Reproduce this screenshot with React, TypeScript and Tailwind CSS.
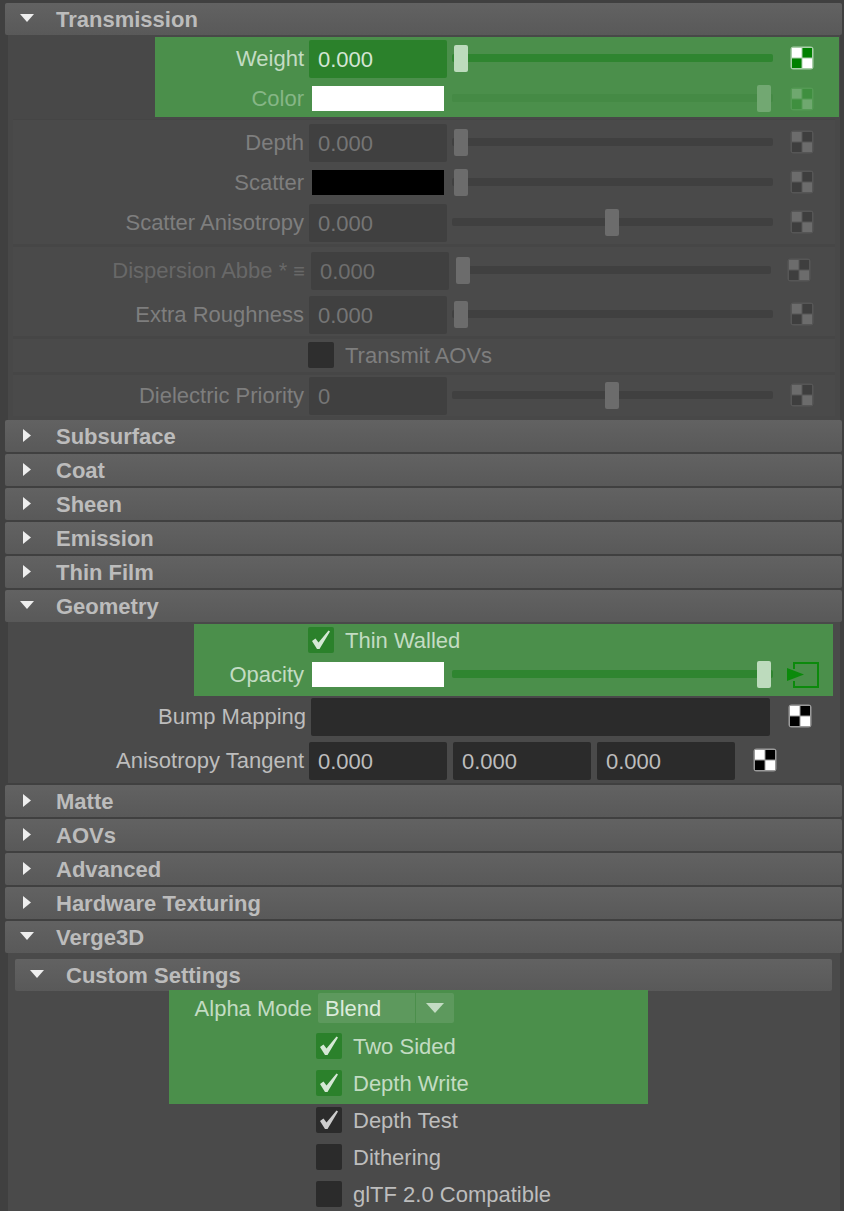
import React from "react";

const font = "font-['Liberation_Sans',Arial,sans-serif]";

function Tri({ open }: { open: boolean }) {
  return open ? (
    <svg width="14" height="8" viewBox="0 0 14 8" className="ml-[15px] mt-[-3px] shrink-0"><path d="M0 0H14L7 8Z" fill="#eeeeee" /></svg>
  ) : (
    <svg width="8" height="13" viewBox="0 0 8 13" className="ml-[18px] mr-[3px] mt-[-2px] shrink-0"><path d="M0 0L8 6.5L0 13Z" fill="#eeeeee" /></svg>
  );
}

function Header({ title, open = false }: { title: string; open?: boolean }) {
  return (
    <div className="flex items-center h-[32px] rounded-[2px] bg-gradient-to-b from-[#626262] to-[#595959]">
      <Tri open={open} />
      <span className="ml-[22px] pt-[2px] text-[22px] font-bold text-[#bcbcbc] leading-none">{title}</span>
    </div>
  );
}

type Tone = "normal" | "green" | "greenDim" | "dim" | "dimmer";

const labelTone: Record<Tone, string> = {
  normal: "text-[#bdbdbd]",
  green: "text-[#c3dcc3]",
  greenDim: "text-[#86b686]",
  dim: "text-[#7e7e7e]",
  dimmer: "text-[#686868]",
};

function Checker({ tone = "normal" }: { tone?: Tone }) {
  const c = {
    normal: ["#ffffff", "#000000", "#9a9a9a"],
    green: ["#ffffff", "#008000", "#a9cfa9"],
    greenDim: ["#6fa86f", "#3f8f3f", "#549a54"],
    dim: ["#6c6c6c", "#3e3e3e", "#565656"],
    dimmer: ["#6c6c6c", "#3e3e3e", "#565656"],
  }[tone];
  return (
    <svg width="24" height="24" viewBox="0 0 24 24" className="shrink-0 block">
      <rect x="0.5" y="0.5" width="23" height="23" rx="3" fill={c[2]} />
      <rect x="2" y="2" width="9.5" height="9.5" fill={c[0]} />
      <rect x="12.5" y="2" width="9.5" height="9.5" fill={c[1]} />
      <rect x="2" y="12.5" width="9.5" height="9.5" fill={c[1]} />
      <rect x="12.5" y="12.5" width="9.5" height="9.5" fill={c[0]} />
    </svg>
  );
}

function LinkIcon() {
  return (
    <svg width="32" height="26" viewBox="0 0 32 26" className="shrink-0 block">
      <path d="M7 7V1H31V25H7V19" fill="none" stroke="#0b8a0b" strokeWidth="2" />
      <path d="M0 6L17 12.5L0 19Z" fill="#0b8a0b" />
    </svg>
  );
}

function Slider({ pos, tone, w = "w-[321px]" }: { pos: "min" | "flush" | "mid" | "max"; tone: Tone; w?: string }) {
  const track = { normal: "bg-[#3c3c3c]", green: "bg-[#2f8530]", greenDim: "bg-[#458a45]", dim: "bg-[#404040]", dimmer: "bg-[#404040]" }[tone];
  const thumb = { normal: "bg-[#8a8a8a]", green: "bg-[#bddbbd]", greenDim: "bg-[#72a872]", dim: "bg-[#6c6c6c]", dimmer: "bg-[#6c6c6c]" }[tone];
  const place = { min: "justify-start pl-[2px]", flush: "justify-start", mid: "justify-center pr-[1px]", max: "justify-end pr-[2px]" }[pos];
  return (
    <div className={`relative flex items-center h-[27px] shrink-0 ${w} ${place}`}>
      <div className={`absolute left-0 right-0 top-[9px] h-[8px] rounded-[2px] ${track}`} />
      <div className={`relative w-[14px] h-[27px] rounded-[2px] ${thumb}`} />
    </div>
  );
}

function NumInput({ v, tone, w = "w-[138px]" }: { v: string; tone: Tone; w?: string }) {
  const bg = { normal: "bg-[#2b2b2b] text-[#bdbdbd]", green: "bg-[#2b812b] text-[#d4e6d4]", greenDim: "", dim: "bg-[#404040] text-[#757575]", dimmer: "bg-[#404040] text-[#6e6e6e]" }[tone];
  return <div className={`flex items-center h-[38px] ${w} pl-[9px] rounded-[2px] shrink-0 text-[22px] ${bg}`}>{v}</div>;
}

function Swatch({ color, up = false }: { color: string; up?: boolean }) {
  return (
    <div className={`flex justify-center w-[138px] shrink-0 ${up ? "mb-[2px]" : ""}`}>
      <div className={`w-[132px] h-[25px] ${color}`} />
    </div>
  );
}

function Row({
  label,
  tone,
  h = "h-[40px]",
  children,
  cw = "w-[526px]",
  pr = "pr-[5px]",
  lift = true,
}: {
  label: React.ReactNode;
  tone: Tone;
  h?: string;
  children: React.ReactNode;
  cw?: string;
  pr?: string;
  lift?: boolean;
}) {
  return (
    <div className={`flex items-center ${h}`}>
      <div className={`flex-1 min-w-0 text-right whitespace-nowrap text-[22px] ${lift ? "pb-[2px]" : ""} ${pr} ${labelTone[tone]}`}>{label}</div>
      <div className={`flex items-center shrink-0 ${cw}`}>{children}</div>
    </div>
  );
}

function Tail({ pos, tone }: { pos: "min" | "mid" | "max"; tone: Tone }) {
  return (
    <>
      <div className="ml-[5px] mb-[1px]"><Slider pos={pos} tone={tone} /></div>
      <div className="ml-[17px] mb-[2px]"><Checker tone={tone} /></div>
    </>
  );
}

function Check({ checked, tone }: { checked: boolean; tone: "green" | "dark" | "dim" }) {
  const bg = { green: "bg-[#2b812b]", dark: "bg-[#2b2b2b]", dim: "bg-[#2e2e2e]" }[tone];
  return (
    <div className={`w-[26px] h-[26px] rounded-[2px] shrink-0 ${bg}`}>
      {checked && (
        <svg width="26" height="26" viewBox="0 0 26 26" className="block">
          <path d="M4 14L7.5 11.5L10.5 15.5L20.5 3.5L22 4.5L11.5 22H9Z" fill={tone === "green" ? "#d5e8d5" : "#cccccc"} />
        </svg>
      )}
    </div>
  );
}

function CheckRow({
  label,
  checked = false,
  tone,
  text,
  indent,
}: {
  label: string;
  checked?: boolean;
  tone: "green" | "dark" | "dim";
  text: string;
  indent: string;
}) {
  return (
    <div className={`flex items-center h-[26px] ${indent}`}>
      <Check checked={checked} tone={tone} />
      <span className={`ml-[11px] pt-[2px] text-[22px] leading-none whitespace-nowrap ${text}`}>{label}</span>
    </div>
  );
}

function Sep() {
  return <div className="h-[3px] mx-[5px] bg-[#464646]" />;
}

export default function App() {
  return (
    <div className={`w-[844px] h-[1211px] overflow-hidden bg-[#404040] pt-[3px] pl-[5px] pr-[2px] ${font}`}>
      <Header title="Transmission" open />
      <div className="h-[385px] ml-[3px] mr-[2px] bg-[#484848]">
        <div className="h-[2px]" />
        <div className="ml-[147px] mr-[1px] h-[80px] pt-[3px] bg-[#4b8f4b]">
          <Row label="Weight" tone="green" h="h-[38px]" cw="w-[530px]">
            <NumInput v="0.000" tone="green" />
            <Tail pos="min" tone="green" />
          </Row>
          <Row label="Color" tone="greenDim" h="h-[40px]" cw="w-[530px]" lift={false}>
            <Swatch color="bg-white" />
            <div className="ml-[5px] mt-[1px]"><Slider pos="max" tone="greenDim" /></div>
            <div className="ml-[17px] mt-[2px]"><Checker tone="greenDim" /></div>
          </Row>
        </div>
        <div className="h-[2px]" />
        <div className="mx-[5px] h-[125px] pt-[3px] border-t border-[#454545] bg-[#4a4a4a]">
          <Row label="Depth" tone="dim">
            <NumInput v="0.000" tone="dim" />
            <Tail pos="min" tone="dim" />
          </Row>
          <Row label="Scatter" tone="dim">
            <Swatch color="bg-black" up />
            <Tail pos="min" tone="dim" />
          </Row>
          <Row label="Scatter Anisotropy" tone="dim">
            <NumInput v="0.000" tone="dim" />
            <Tail pos="mid" tone="dim" />
          </Row>
        </div>
        <Sep />
        <div className="mx-[5px] h-[89px] bg-[#4a4a4a] pt-[4px]">
          <Row
            label={<>Dispersion Abbe * <span className="text-[20px]">≡</span></>}
            tone="dimmer"
            cw="w-[524px]"
            pr="pr-[6px]"
          >
            <NumInput v="0.000" tone="dimmer" />
            <div className="ml-[7px] mb-[1px]"><Slider pos="flush" tone="dimmer" w="w-[315px]" /></div>
            <div className="ml-[16px] mb-[2px]"><Checker tone="dimmer" /></div>
          </Row>
          <div className="h-[4px]" />
          <Row label="Extra Roughness" tone="dim">
            <NumInput v="0.000" tone="dim" />
            <Tail pos="min" tone="dim" />
          </Row>
        </div>
        <Sep />
        <div className="mx-[5px] h-[33px] bg-[#4a4a4a] pt-[3px]">
          <CheckRow label="Transmit AOVs" tone="dim" text="text-[#7e7e7e]" indent="ml-[295px]" />
        </div>
        <Sep />
        <div className="mx-[5px] h-[41px] bg-[#4a4a4a] pt-[1px]">
          <Row label="Dielectric Priority" tone="dim">
            <NumInput v="0" tone="dim" />
            <Tail pos="mid" tone="dim" />
          </Row>
        </div>
      </div>
      <div className="flex flex-col gap-[2px]">
        <Header title="Subsurface" />
        <Header title="Coat" />
        <Header title="Sheen" />
        <Header title="Emission" />
        <Header title="Thin Film" />
        <Header title="Geometry" open />
      </div>
      <div className="h-[161px] ml-[3px] mr-[2px] bg-[#4a4a4a] pt-[2px]">
        <div className="ml-[186px] mr-[7px] h-[72px] bg-[#4b8f4b] pt-[3px]">
          <CheckRow label="Thin Walled" checked tone="green" text="text-[#c3dcc3]" indent="ml-[114px]" />
          <div className="h-[2px]" />
          <Row label="Opacity" tone="green" h="h-[39px]" cw="w-[524px]" lift={false}>
            <Swatch color="bg-white" />
            <div className="ml-[5px]"><Slider pos="max" tone="green" /></div>
            <div className="ml-[14px]"><LinkIcon /></div>
          </Row>
        </div>
        <div className="flex items-center h-[42px]">
          <div className="w-[298px] pb-[2px] text-right text-[22px] text-[#bdbdbd]">Bump Mapping</div>
          <div className="ml-[5px] w-[459px] h-[38px] rounded-[2px] bg-[#2b2b2b]" />
          <div className="ml-[18px] mb-[2px]"><Checker /></div>
        </div>
        <div className="h-[4px]" />
        <div className="flex items-center h-[38px]">
          <div className="w-[296px] pb-[2px] text-right text-[22px] text-[#bdbdbd]">Anisotropy Tangent</div>
          <div className="ml-[5px]"><NumInput v="0.000" tone="normal" /></div>
          <div className="ml-[6px]"><NumInput v="0.000" tone="normal" /></div>
          <div className="ml-[6px]"><NumInput v="0.000" tone="normal" /></div>
          <div className="ml-[18px] mb-[2px]"><Checker /></div>
        </div>
      </div>
      <div className="h-[2px]" />
      <div className="flex flex-col gap-[2px]">
        <Header title="Matte" />
        <Header title="AOVs" />
        <Header title="Advanced" />
        <Header title="Hardware Texturing" />
        <Header title="Verge3D" open />
      </div>
      <div className="ml-[3px] mr-[2px] h-[260px] bg-[#4a4a4a] pt-[6px]">
        <div className="flex items-center h-[32px] ml-[7px] mr-[8px] rounded-[2px] bg-gradient-to-b from-[#626262] to-[#595959]">
          <Tri open />
          <span className="ml-[22px] pt-[2px] text-[22px] font-bold text-[#bcbcbc] leading-none">Custom Settings</span>
        </div>
        <div className="ml-[161px] w-[479px] h-[114px] -mt-[1px] bg-[#4b8f4b] pt-[3px]">
          <div className="flex items-center h-[30px]">
            <div className="w-[143px] text-right text-[22px] text-[#c3dcc3]">Alpha Mode</div>
            <div className="ml-[6px] flex h-[30px] w-[136px] gap-[1px]">
              <div className="flex items-center w-[97px] pl-[7px] rounded-l-[2px] bg-[#5d995d] text-[22px] text-[#dcebdc]">Blend</div>
              <div className="flex items-center justify-center w-[38px] rounded-r-[2px] bg-[#5d995d]">
                <svg width="18" height="10" viewBox="0 0 18 10"><path d="M0 0H18L9 10Z" fill="#c3dcc3" /></svg>
              </div>
            </div>
          </div>
          <div className="h-[10px]" />
          <CheckRow label="Two Sided" checked tone="green" text="text-[#c3dcc3]" indent="ml-[147px]" />
          <div className="h-[11px]" />
          <CheckRow label="Depth Write" checked tone="green" text="text-[#c3dcc3]" indent="ml-[147px]" />
        </div>
        <div className="h-[3px]" />
        <div className="flex flex-col gap-[11px]">
          <CheckRow label="Depth Test" checked tone="dark" text="text-[#bdbdbd]" indent="ml-[308px]" />
          <CheckRow label="Dithering" tone="dark" text="text-[#bdbdbd]" indent="ml-[308px]" />
          <CheckRow label="glTF 2.0 Compatible" tone="dark" text="text-[#bdbdbd]" indent="ml-[308px]" />
        </div>
      </div>
    </div>
  );
}
